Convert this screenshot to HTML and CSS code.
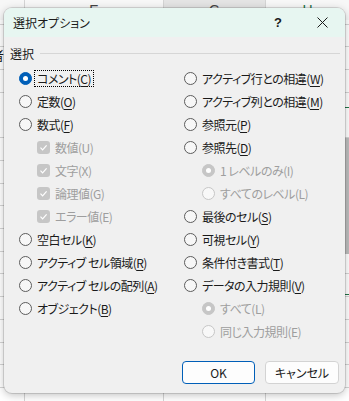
FILE: index.html
```html
<!DOCTYPE html>
<html lang="ja">
<head>
  <meta charset="UTF-8">
  <title>選択オプション</title>
  <link rel="stylesheet" href="styles.css">
</head>
<body>
  <div id="sheet">
    <div class="col-head">
      <div class="ch ch-d"></div>
      <div class="ch ch-e">E</div>
      <div class="ch ch-g">G</div>
      <div class="ch ch-h">H</div>
    </div>
    <div class="cell-text">者</div>
    <div class="sel-band"></div>
  </div>

  <div id="dialog">
    <div class="titlebar">
      <span class="title">選択オプション</span>
      <span class="tb-btn help">?</span>
      <span class="tb-btn close">
        <svg width="11" height="11" viewBox="0 0 11 11"><path d="M.5 .5 10.5 10.5M10.5 .5 .5 10.5" stroke="#1a1a1a" stroke-width="1"/></svg>
      </span>
    </div>

    <div class="body">
      <div class="group-label"><span>選択</span><i></i></div>

      <div class="options">
        <div class="col">
          <div class="opt"><span class="radio on"></span><span class="lbl focus">コメント(<u>C</u>)</span></div>
          <div class="opt"><span class="radio"></span><span class="lbl">定数(<u>O</u>)</span></div>
          <div class="opt"><span class="radio"></span><span class="lbl">数式(<u>F</u>)</span></div>
          <div class="opt sub dis"><svg class="check" width="13" height="13" viewBox="0 0 13 13"><rect width="13" height="13" rx="3" fill="#c6c6c6"/><path d="M3.5 6.7 5.6 8.8 9.6 4.4" fill="none" stroke="#fff" stroke-width="1.2"/></svg><span class="lbl">数値(U)</span></div>
          <div class="opt sub dis"><svg class="check" width="13" height="13" viewBox="0 0 13 13"><rect width="13" height="13" rx="3" fill="#c6c6c6"/><path d="M3.5 6.7 5.6 8.8 9.6 4.4" fill="none" stroke="#fff" stroke-width="1.2"/></svg><span class="lbl">文字(X)</span></div>
          <div class="opt sub dis"><svg class="check" width="13" height="13" viewBox="0 0 13 13"><rect width="13" height="13" rx="3" fill="#c6c6c6"/><path d="M3.5 6.7 5.6 8.8 9.6 4.4" fill="none" stroke="#fff" stroke-width="1.2"/></svg><span class="lbl">論理値(G)</span></div>
          <div class="opt sub dis"><svg class="check" width="13" height="13" viewBox="0 0 13 13"><rect width="13" height="13" rx="3" fill="#c6c6c6"/><path d="M3.5 6.7 5.6 8.8 9.6 4.4" fill="none" stroke="#fff" stroke-width="1.2"/></svg><span class="lbl">エラー値(E)</span></div>
          <div class="opt"><span class="radio"></span><span class="lbl">空白セル(<u>K</u>)</span></div>
          <div class="opt"><span class="radio"></span><span class="lbl">アクティブ セル領域(<u>R</u>)</span></div>
          <div class="opt"><span class="radio"></span><span class="lbl">アクティブ セルの配列(<u>A</u>)</span></div>
          <div class="opt"><span class="radio"></span><span class="lbl">オブジェクト(<u>B</u>)</span></div>
        </div>
        <div class="col">
          <div class="opt"><span class="radio"></span><span class="lbl">アクティブ行との相違(<u>W</u>)</span></div>
          <div class="opt"><span class="radio"></span><span class="lbl">アクティブ列との相違(<u>M</u>)</span></div>
          <div class="opt"><span class="radio"></span><span class="lbl">参照元(<u>P</u>)</span></div>
          <div class="opt"><span class="radio"></span><span class="lbl">参照先(<u>D</u>)</span></div>
          <div class="opt sub dis"><span class="radio on"></span><span class="lbl">1 レベルのみ(I)</span></div>
          <div class="opt sub dis"><span class="radio"></span><span class="lbl">すべてのレベル(L)</span></div>
          <div class="opt"><span class="radio"></span><span class="lbl">最後のセル(<u>S</u>)</span></div>
          <div class="opt"><span class="radio"></span><span class="lbl">可視セル(<u>Y</u>)</span></div>
          <div class="opt"><span class="radio"></span><span class="lbl">条件付き書式(<u>T</u>)</span></div>
          <div class="opt"><span class="radio"></span><span class="lbl">データの入力規則(<u>V</u>)</span></div>
          <div class="opt sub dis"><span class="radio on"></span><span class="lbl">すべて(L)</span></div>
          <div class="opt sub dis"><span class="radio"></span><span class="lbl">同じ入力規則(E)</span></div>
        </div>
      </div>

      <div class="buttons">
        <button class="btn default">OK</button>
        <button class="btn">キャンセル</button>
      </div>
    </div>
  </div>
</body>
</html>
```

FILE: styles.css
```css
body {
    margin: 0;
    width: 349px;
    height: 401px;
    overflow: hidden;
    position: relative;
    background: #fff;
    font-family: 'Noto Sans CJK JP', sans-serif;
    font-feature-settings: "palt";
    color: #1a1a1a;
}
#sheet {
    height: 100%;
    background:
        linear-gradient(90deg, transparent 24px, #d4d4d4 24px, #d4d4d4 25px, transparent 25px,
            transparent 163px, #d4d4d4 163px, #d4d4d4 164px, transparent 164px,
            transparent 265px, #d4d4d4 265px, #d4d4d4 266px, transparent 266px),
        repeating-linear-gradient(180deg, transparent 0, transparent 21.7px, #d4d4d4 21.7px, #d4d4d4 22.7px) 0 2px;
}
.col-head {
    display: flex;
    height: 20px;
    background: #f7f7f7;
    font: 14px 'Liberation Sans', sans-serif;
    line-height: 20px;
    color: #444;
}
.ch {
    text-align: center;
    border-right: 1px solid #d4d4d4;
}
.ch-d { width: 24px; }
.ch-e { width: 138px; }
.ch-g { width: 101px; background: #e4e4e4; }
.ch-h { flex: 1; color: #1e7145; border-right: none; }
.cell-text {
    position: absolute;
    left: -9px;
    top: 45px;
    font-size: 13px;
}
.sel-band {
    position: absolute;
    left: 340px;
    top: 107px;
    width: 9px;
    height: 186px;
    border-top: 1px solid #217346;
    border-bottom: 1px solid #217346;
    background: linear-gradient(180deg, transparent 30px, #bdbdbd 30px, #bdbdbd 146px, transparent 146px);
}

#dialog {
    position: absolute;
    left: 4px;
    top: 8px;
    width: 341px;
    height: 385px;
    background: #f0f0f0;
    border-radius: 8px;
    box-shadow: 0 0 0 1px rgba(0, 0, 0, .12), 0 2px 8px rgba(0, 0, 0, .25);
    overflow: hidden;
    display: flex;
    flex-direction: column;
    font-size: 12px;
}
.titlebar {
    display: flex;
    align-items: center;
    height: 29px;
    flex: none;
    background: #e7f6f1;
    padding: 0 1px 0 9px;
}
.title {
    flex: 1;
}
.tb-btn {
    width: 44px;
    display: flex;
    justify-content: center;
    align-items: center;
}
.help {
    font: bold 13px 'Liberation Sans', sans-serif;
}
.body {
    flex: 1;
    display: flex;
    flex-direction: column;
    padding: 8px 6px 9px 0;
}
.group-label {
    display: flex;
    align-items: center;
    gap: 6px;
    height: 16px;
    padding-left: 6px;
    margin-right: -1px;
}
.group-label i {
    flex: 1;
    height: 1px;
    background: #d6d6d6;
}
.options {
    display: grid;
    grid-template-columns: 165px 1fr;
    margin-top: 6px;
    padding-left: 15px;
    letter-spacing: -0.5px;
}
.opt {
    display: flex;
    align-items: center;
    height: 23px;
    white-space: nowrap;
}
.opt.sub {
    padding-left: 18px;
}
.opt.dis {
    color: #9e9e9e;
}
.radio {
    width: 13px;
    height: 13px;
    box-sizing: border-box;
    border: 1px solid #5c5c5c;
    border-radius: 50%;
    background: #f7f7f7;
    flex: none;
    margin-right: 2px;
    display: grid;
    place-items: center;
}
.radio.on {
    background: #005fb8;
    border-color: #005fb8;
}
.radio.on::after {
    content: "";
    width: 5px;
    height: 5px;
    border-radius: 50%;
    background: #fff;
}
.dis .radio {
    border-color: #c6c6c6;
    background: #f8f8f8;
}
.dis .radio.on {
    background: #c6c6c6;
}
.check {
    flex: none;
    margin-right: 2px;
}
.lbl {
    padding: 0 2px;
    line-height: 15px;
    border: 1px solid transparent;
}
.lbl.focus {
    border: 1px dotted #000;
}
u {
    text-underline-offset: 2px;
}
.buttons {
    margin-top: auto;
    display: flex;
    justify-content: flex-end;
    gap: 10px;
}
.btn {
    width: 73px;
    height: 23px;
    font: inherit;
    color: #1a1a1a;
    background: #fdfdfd;
    border: 1px solid #d3d3d3;
    border-radius: 4px;
    padding: 0;
}
.btn + .btn {
    width: 74px;
}
.btn.default {
    border-color: #005fb8;
}
```
